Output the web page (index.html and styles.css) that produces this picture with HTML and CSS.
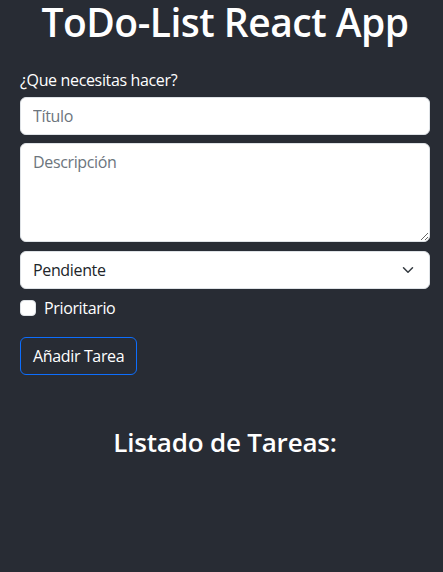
FILE: index.html
```html
<!DOCTYPE html>
<html lang="es">
<head>
<meta charset="utf-8">
<title>ToDo-List React App</title>
<link rel="stylesheet" href="styles.css">
</head>
<body>
<div class="app">
  <h1 class="title">ToDo-List React App</h1>
  <form class="todo-form">
    <label class="form-label" for="titulo">¿Que necesitas hacer?</label>
    <input id="titulo" class="form-control input" type="text" placeholder="Título">
    <textarea class="form-control textarea" placeholder="Descripción"></textarea>
    <div class="select-wrap">
      <select class="form-select">
        <option>Pendiente</option>
        <option>Completada</option>
      </select>
      <svg class="chevron" width="16" height="12" viewBox="0 0 16 16"><path fill="none" stroke="#343a40" stroke-linecap="round" stroke-linejoin="round" stroke-width="2" d="m2 5 6 6 6-6"/></svg>
    </div>
    <div class="form-check">
      <input id="prio" class="check-input" type="checkbox">
      <label for="prio" class="check-label">Prioritario</label>
    </div>
    <button type="button" class="btn-outline">Añadir Tarea</button>
  </form>
  <h2 class="list-title">Listado de Tareas:</h2>
</div>
</body>
</html>
```
FILE: styles.css
```css
html, body {
  margin: 0;
  padding: 0;
}
body {
  background: #282c34;
  color: #fff;
  font-family: "Open Sans", "Noto Sans", sans-serif;
  font-size: 16px;
  line-height: 1.5;
  height: 572px;
  letter-spacing: -0.35px;
}
.app {
  padding: 0 13px 0 20px;
}
.title {
  margin: 0;
  font-size: 39px;
  font-weight: 600;
  line-height: 44px;
  text-align: center;
  letter-spacing: -0.5px;
}
.todo-form {
  display: flex;
  flex-direction: column;
  align-items: flex-start;
  margin-top: 24px;
}
.form-label {
  display: block;
  margin-bottom: 5px;
  font-size: 16px;
  line-height: 24px;
}
.form-control {
  box-sizing: border-box;
  display: block;
  width: 100%;
  height: 38px;
  padding: 6px 12px;
  font-family: inherit;
  font-size: 16px;
  line-height: 24px;
  letter-spacing: -0.35px;
  color: #212529;
  background: #fff;
  border: 1px solid #dee2e6;
  border-radius: 6px;
  margin: 0;
  outline: none;
}
.form-control::placeholder {
  color: #6c757d;
}
.input {
  margin-bottom: 8px;
}
.textarea {
  height: 99px;
  resize: vertical;
  margin-bottom: 9px;
}
.select-wrap {
  position: relative;
  width: 100%;
  margin-bottom: 9px;
}
.form-select {
  box-sizing: border-box;
  display: block;
  width: 100%;
  height: 38px;
  padding: 6px 36px 6px 12px;
  font-family: inherit;
  font-size: 16px;
  line-height: 24px;
  letter-spacing: -0.35px;
  color: #212529;
  background: #fff;
  border: 1px solid #dee2e6;
  border-radius: 6px;
  appearance: none;
  -webkit-appearance: none;
  outline: none;
}
.chevron {
  position: absolute;
  right: 14px;
  top: 13px;
  pointer-events: none;
}
.form-check {
  display: flex;
  align-items: center;
  gap: 8px;
  margin-top: -2px;
  height: 24px;
}
.check-input {
  appearance: none;
  -webkit-appearance: none;
  width: 16px;
  height: 16px;
  margin: 0;
  background: #fff;
  border: 1px solid #dee2e6;
  border-radius: 4px;
}
.check-label {
  font-size: 16px;
  line-height: 24px;
}
.btn-outline {
  margin-top: 17px;
  box-sizing: border-box;
  height: 38px;
  padding: 6px 12px;
  font-family: inherit;
  font-size: 16px;
  line-height: 24px;
  letter-spacing: -0.35px;
  color: #fff;
  background: transparent;
  border: 1px solid #0d6efd;
  border-radius: 6px;
}
.list-title {
  margin: 52px 0 0 0;
  font-size: 26px;
  font-weight: 600;
  line-height: 30px;
  text-align: center;
  letter-spacing: -0.2px;
}
```
